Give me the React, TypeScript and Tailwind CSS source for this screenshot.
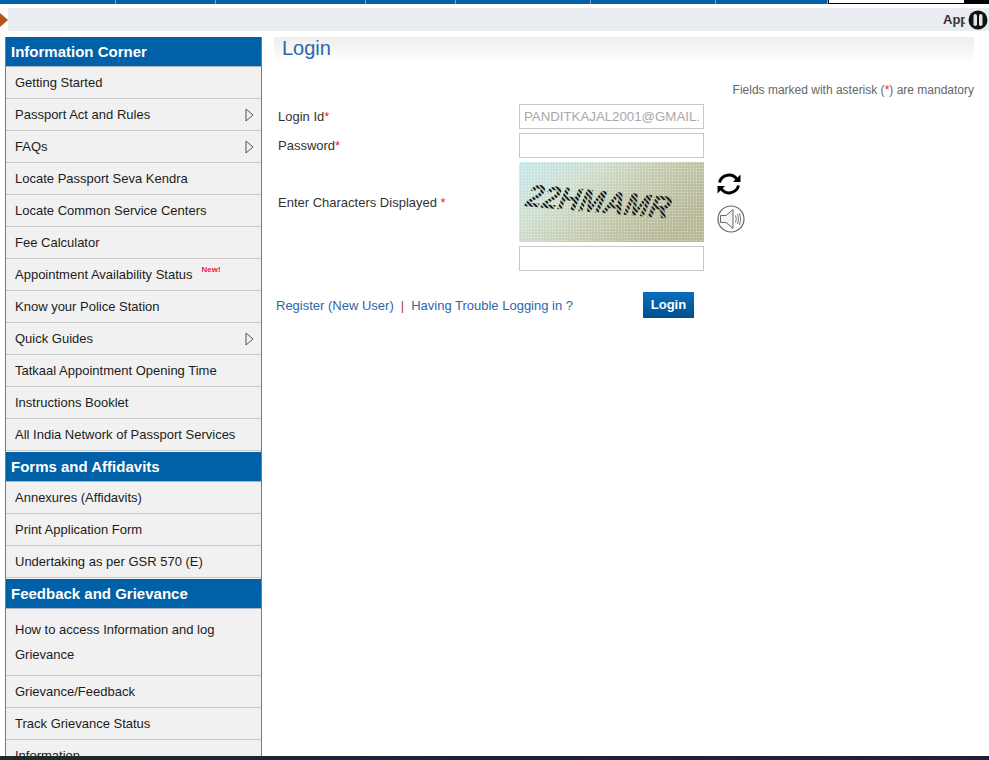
import React from 'react';

type MenuItem = { label: string; arrow?: boolean; isNew?: boolean };

const INFO_ITEMS: MenuItem[] = [
  { label: 'Getting Started' },
  { label: 'Passport Act and Rules', arrow: true },
  { label: 'FAQs', arrow: true },
  { label: 'Locate Passport Seva Kendra' },
  { label: 'Locate Common Service Centers' },
  { label: 'Fee Calculator' },
  { label: 'Appointment Availability Status', isNew: true },
  { label: 'Know your Police Station' },
  { label: 'Quick Guides', arrow: true },
  { label: 'Tatkaal Appointment Opening Time' },
  { label: 'Instructions Booklet' },
  { label: 'All India Network of Passport Services' },
];

const FORM_ITEMS: MenuItem[] = [
  { label: 'Annexures (Affidavits)' },
  { label: 'Print Application Form' },
  { label: 'Undertaking as per GSR 570 (E)' },
];

const NAV_WIDTHS = ['w-[116px]', 'w-[100px]', 'w-[150px]', 'w-[90px]', 'w-[135px]', 'w-[125px]', 'w-[112px]'];

const Row: React.FC<{ item: MenuItem }> = ({ item }) => (
  <div className="h-[32px] flex items-center justify-between pl-[9px] pr-[7px] border-b border-[#c8c8c8] text-[13px] text-[#1c1c1c]">
    <span className="flex items-start">
      {item.label}
      {item.isNew && <span className="ml-[9px] -mt-[1px] text-[8px] font-bold leading-[12px] text-[#f01c3c]">New!</span>}
    </span>
    {item.arrow && (
      <svg width="9" height="14" viewBox="0 0 9 14" className="shrink-0">
        <path d="M1 1 L8 7 L1 13 Z" fill="none" stroke="#555" strokeWidth="1" />
      </svg>
    )}
  </div>
);

const Heading: React.FC<{ title: string; first?: boolean }> = ({ title, first }) => (
  <div className={`h-[30px] flex items-center pl-[5px] pt-[1px] bg-[#0060a8] text-white text-[15px] font-bold border-b border-[#a9b4c2] ${first ? '' : 'mt-[1px]'}`}>
    {title}
  </div>
);

const Field: React.FC<{ value?: string }> = ({ value }) => (
  <input
    readOnly
    value={value ?? ''}
    className="block w-[185px] h-[25px] px-[4px] border border-[#c8c8c8] bg-white text-[13.25px] text-[#a9a9a9] outline-none"
  />
);

const Captcha = () => (
  <svg width="185" height="80" viewBox="0 0 185 80" className="block">
    <defs>
      <linearGradient id="bg" x1="0" y1="0" x2="1" y2="0.5">
        <stop offset="0" stopColor="#c8ecf0" />
        <stop offset="0.35" stopColor="#d3e2d2" />
        <stop offset="0.65" stopColor="#c9cfb4" />
        <stop offset="1" stopColor="#bcbc9c" />
      </linearGradient>
      <pattern id="dots" width="3" height="3" patternUnits="userSpaceOnUse">
        <rect width="1" height="1" fill="#ffffff" opacity="0.45" />
        <rect x="1.5" y="1.5" width="1" height="1" fill="#5f6f5f" opacity="0.18" />
      </pattern>
      <pattern id="ink" width="3" height="3" patternUnits="userSpaceOnUse" patternTransform="rotate(35)">
        <rect width="3" height="1.7" fill="#10181c" />
      </pattern>
    </defs>
    <rect width="185" height="80" fill="url(#bg)" />
    <rect width="185" height="80" fill="url(#dots)" />
    <text
      x="0"
      y="0"
      transform="translate(4 44) rotate(5) skewX(-18)"
      fill="url(#ink)"
      fontFamily="'Liberation Sans', sans-serif"
      fontSize="32"
      fontWeight="700"
      textLength="144"
      lengthAdjust="spacingAndGlyphs"
    >
      22HMAMR
    </text>
  </svg>
);

const Links = () => (
  <div className="flex items-center pt-[1px] text-[13px] text-[#2e66a8]">
    <a>Register (New User)</a>
    <span className="mx-[7px] text-[#a8434a]">|</span>
    <a>Having Trouble Logging in ?</a>
  </div>
);

export default function App() {
  return (
    <div className="h-[760px] w-[989px] overflow-hidden flex flex-col bg-white font-['Liberation_Sans',Arial,sans-serif]">
      {/* top nav, scrolled almost out of view */}
      <div className="h-[4px] shrink-0 flex bg-[#0060a8]">
        {NAV_WIDTHS.map((w, i) => (
          <div key={i} className={`${w} h-full border-r border-[#7da6cc]`} />
        ))}
        <div className="w-[137px] h-full bg-white border border-t-0 border-black" />
        <div className="flex-1 h-full bg-black" />
      </div>

      {/* ticker */}
      <div className="h-[23px] mt-[4px] shrink-0 flex">
        <div className="w-[8px] flex items-center">
          <div className="w-0 h-0 border-y-[7px] border-y-transparent border-l-[8px] border-l-[#b5531c]" />
        </div>
        <div className="flex-1 flex items-center justify-end bg-[#e9edf1]">
          <span className="w-[22px] overflow-hidden text-[13px] font-bold text-[#333]">Appointment</span>
          <svg width="20" height="20" viewBox="0 0 20 20" className="ml-[3px] mr-[1px]">
            <circle cx="10" cy="10" r="9.5" fill="#111" />
            <rect x="5.5" y="4" width="3.5" height="12" rx="1.7" fill="#e4e4e4" />
            <rect x="11" y="4" width="3.5" height="12" rx="1.7" fill="#e4e4e4" />
          </svg>
        </div>
      </div>

      <div className="flex-1 min-h-0 overflow-hidden flex items-start mt-[6px] pl-[5px] pr-[15px]">
        {/* sidebar */}
        <aside className="w-[257px] shrink-0 bg-[#f1f1f1] border-x border-[#5f7fa8]">
          <Heading first title="Information Corner" />
          {INFO_ITEMS.map((item) => (
            <Row key={item.label} item={item} />
          ))}
          <Heading title="Forms and Affidavits" />
          {FORM_ITEMS.map((item) => (
            <Row key={item.label} item={item} />
          ))}
          <Heading title="Feedback and Grievance" />
          <div className="h-[67px] flex items-center pl-[9px] pr-[7px] border-b border-[#c8c8c8] text-[13px] leading-[25px] text-[#1c1c1c]">
            How to access Information and log Grievance
          </div>
          <Row item={{ label: 'Grievance/Feedback' }} />
          <Row item={{ label: 'Track Grievance Status' }} />
          <Row item={{ label: 'Information' }} />
        </aside>

        {/* login form */}
        <main className="flex-1 ml-[12px]">
          <h1 className="h-[27px] pl-[8px] text-[20px] leading-[23px] text-[#2e66a8] bg-gradient-to-b from-[#eeeeee] to-white">Login</h1>
          <p className="mt-[18px] text-right text-[12px] leading-[16px] text-[#666]">
            Fields marked with asterisk (<span className="text-[#f01c3c]">*</span>) are mandatory
          </p>
          <div className="mt-[6px] ml-[4px] grid grid-cols-[241px_auto_1fr] gap-y-[4px] items-center text-[13px] text-[#333]">
            <label>Login Id<span className="text-[#f01c3c]">*</span></label>
            <Field value="PANDITKAJAL2001@GMAIL.COM" />
            <div />
            <label>Password<span className="text-[#f01c3c]">*</span></label>
            <Field />
            <div />
            <label className="pt-[1px]">Enter Characters Displayed <span className="text-[#f01c3c]">*</span></label>
            <Captcha />
            <div className="flex flex-col items-start gap-[9px] pl-[13px]">
              <svg width="24" height="24" viewBox="0 0 24 24" fill="none" stroke="#000" strokeWidth="3" className="block">
                <path d="M2.5 10.5 A9.7 9.7 0 0 1 20 7.5" />
                <path d="M21.5 13.5 A9.7 9.7 0 0 1 4 16.5" />
                <path d="M23.5 2.5 V10 H16 Z" fill="#000" stroke="none" />
                <path d="M0.5 21.5 V14 H8 Z" fill="#000" stroke="none" />
              </svg>
              <svg width="28" height="28" viewBox="0 0 28 28" fill="none" stroke="#666" className="block">
                <circle cx="14" cy="14" r="13" strokeWidth="1.2" />
                <path d="M3.5 10.5 H9 L16 4.5 V23.5 L9 17.5 H3.5 Z" fill="#f4f4f4" />
                <path d="M18.5 10.5 Q20 14 18.5 17.5 M20.5 9 Q22.5 14 20.5 19 M22.5 8 Q25 14 22.5 20" strokeWidth="0.9" />
              </svg>
            </div>
            <div />
            <Field />
            <div />
          </div>
          <div className="mt-[21px] ml-[2px] flex items-center">
            <div className="w-[367px]"><Links /></div>
            <button className="w-[51px] h-[26px] bg-gradient-to-b from-[#0a6ebd] to-[#00508f] text-white text-[13px] font-bold">Login</button>
          </div>
        </main>
      </div>

      {/* bottom edge of the desktop window */}
      <div className="h-[4px] shrink-0 bg-gradient-to-r from-[#1f2a2c] via-[#1a2236] to-[#2a1a3a]" />
    </div>
  );
}
